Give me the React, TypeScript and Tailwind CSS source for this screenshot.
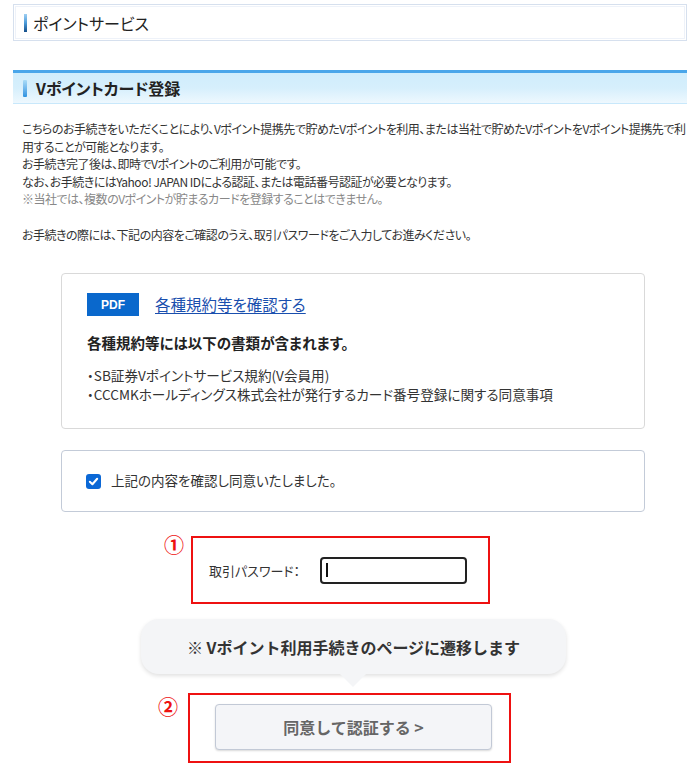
import React from "react";

const jp = { fontFamily: '"Noto Sans CJK JP", "Noto Sans", sans-serif' };

export default function App() {
  return (
    <div className="w-[700px] h-[782px] bg-white text-[#333] overflow-hidden" style={jp}>
      <div className="px-[13px] pt-[4px]">
        {/* top header */}
        <div className="h-[37px] border border-[#d6e0ee] p-[1px]">
          <div className="h-full border border-[#eef2f9] flex items-center pl-[8px]">
            <div className="w-[3px] h-[18px] bg-gradient-to-b from-[#9fd0f3] via-[#4a9ad8] to-[#154f8a] mr-[6px]" />
            <span className="text-[16px] [font-feature-settings:'palt'] text-[#222] leading-none">ポイントサービス</span>
          </div>
        </div>

        {/* blue header */}
        <div className="mt-[29px] h-[34px] border-t-[3px] border-[#4aa6ea] border-b border-b-[#c8e8fb] bg-gradient-to-b from-[#d0edfc] via-[#d6effc] to-[#eef8fe] flex items-center pl-[10px]">
          <div className="w-[4px] h-[17px] rounded-[1px] bg-gradient-to-b from-[#a9dcf7] to-[#2b92e0] mr-[9px]" />
          <span className="text-[16px] font-bold [font-feature-settings:'palt'] text-[#222] leading-none">Vポイントカード登録</span>
        </div>
      </div>

      {/* paragraph */}
      <div className="mt-[16px] pl-[22px] text-[12px] tracking-[-0.5px] leading-[17.6px] [font-feature-settings:'palt'] text-[#333] whitespace-nowrap">
        <p>こちらのお手続きをいただくことにより、Vポイント提携先で貯めたVポイントを利用、または当社で貯めたVポイントをVポイント提携先で利</p>
        <p>用することが可能となります。</p>
        <p>お手続き完了後は、即時でVポイントのご利用が可能です。</p>
        <p>なお、お手続きにはYahoo! JAPAN IDによる認証、または電話番号認証が必要となります。</p>
        <p className="text-[#888]">※当社では、複数のVポイントが貯まるカードを登録することはできません。</p>
        <p>&nbsp;</p>
        <p>お手続きの際には、下記の内容をご確認のうえ、取引パスワードをご入力してお進みください。</p>
      </div>

      {/* box 1 */}
      <div className="ml-[61px] mt-[30px] w-[584px] h-[156px] border border-[#d9d9d9] rounded-[4px] pl-[25px] pt-[19px]">
        <div className="flex items-center">
          <div className="w-[52px] h-[23px] bg-[#0a68cc] text-white text-[12px] font-bold flex items-center justify-center" style={{ fontFamily: '"Liberation Sans", Arial, sans-serif' }}>
            PDF
          </div>
          <a className="ml-[16px] text-[15.5px] text-[#1a4fae] underline underline-offset-2 [font-feature-settings:'palt'] leading-none">各種規約等を確認する</a>
        </div>
        <div className="mt-[20px] text-[14.5px] font-bold text-[#222] [font-feature-settings:'palt'] leading-none">各種規約等には以下の書類が含まれます。</div>
        <div className="mt-[15px] text-[13.6px] leading-[19px] [font-feature-settings:'palt'] text-[#333]">
          <p>・SB証券Vポイントサービス規約(V会員用)</p>
          <p>・CCCMKホールディングス株式会社が発行するカード番号登録に関する同意事項</p>
        </div>
      </div>

      {/* box 2 */}
      <div className="ml-[61px] mt-[21px] w-[584px] h-[62px] border border-[#c3cbd8] rounded-[4px] flex items-center pl-[24px]">
        <div className="w-[15px] h-[15px] rounded-[3px] bg-[#0b68d6] flex items-center justify-center">
          <svg width="11" height="11" viewBox="0 0 12 12">
            <path d="M2 6.3 L4.8 9 L10 3" fill="none" stroke="white" strokeWidth="2.2" strokeLinecap="round" strokeLinejoin="round" />
          </svg>
        </div>
        <span className="ml-[10px] text-[13.5px] [font-feature-settings:'palt'] text-[#333] leading-none">上記の内容を確認し同意いたしました。</span>
      </div>

      {/* red box 1 */}
      <div className="relative ml-[191px] mt-[24px] w-[299px] h-[68px] border-2 border-[#ee1111] flex items-center pl-[16px]">
        <span className="absolute left-[-29px] top-[-3px] text-[#ee1111] text-[20px] font-bold leading-none">①</span>
        <span className="text-[13px] [font-feature-settings:'palt'] text-[#333] leading-none">取引パスワード：</span>
        <div className="ml-[20px] w-[147px] h-[27px] border-2 border-[#222] rounded-[4px] flex items-center pl-[4px]">
          <div className="w-[2px] h-[14px] bg-[#111]" />
        </div>
      </div>

      {/* bubble */}
      <div className="relative ml-[141px] mt-[15px] w-[425px] h-[55px] rounded-[18px] bg-[#f4f5f7] shadow-[0_2px_4px_rgba(0,0,0,0.12)] flex items-center justify-center">
        <span className="text-[16px] font-bold text-[#333] leading-none">※ Vポイント利用手続きのページに遷移します</span>
        <div className="absolute left-[198px] bottom-[-13px] w-0 h-0 border-l-[14px] border-r-[14px] border-t-[14px] border-l-transparent border-r-transparent border-t-[#f4f5f7]" />
      </div>

      {/* red box 2 */}
      <div className="relative ml-[188px] mt-[19px] w-[323px] h-[70px] border-2 border-[#ee1111] pl-[25px] pt-[9px]">
        <span className="absolute left-[-32px] top-[2px] text-[#ee1111] text-[20px] font-bold leading-none">②</span>
        <div className="w-[277px] h-[46px] rounded-[4px] bg-[#f4f5f8] border border-[#c2c9d6] shadow-[0_1px_2px_rgba(0,0,0,0.15)] flex items-center justify-center">
          <span className="text-[16px] font-bold text-[#666] leading-none">同意して認証する &gt;</span>
        </div>
      </div>
    </div>
  );
}
